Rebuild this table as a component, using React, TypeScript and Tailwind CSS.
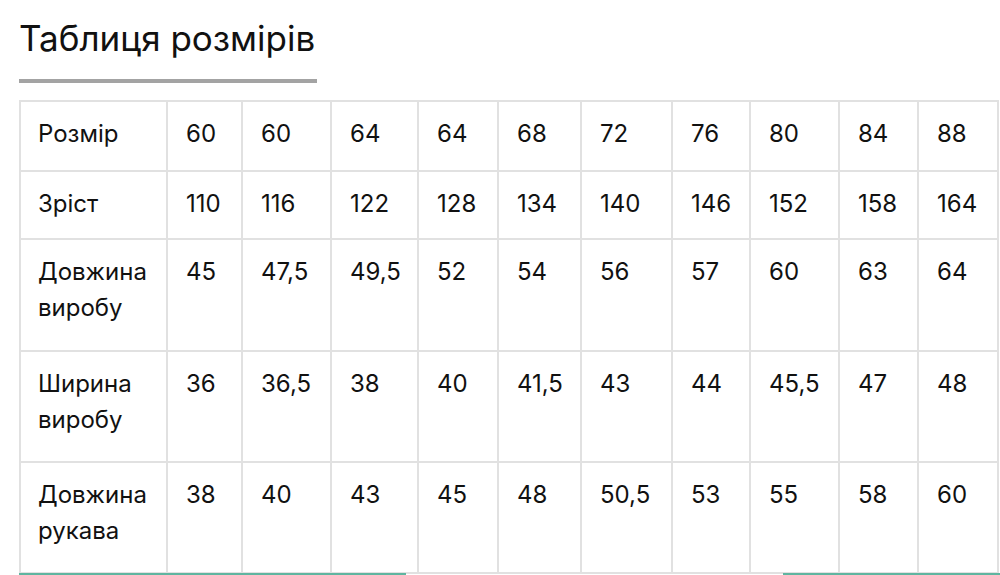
import React from "react";

const widths = [147, 75, 89, 87, 80, 83, 91, 78, 89, 79, 80];
const heights = [70, 68, 112, 111, 111];

const rows: { label: string[]; values: string[] }[] = [
  { label: ["Розмір"], values: ["60", "60", "64", "64", "68", "72", "76", "80", "84", "88"] },
  { label: ["Зріст"], values: ["110", "116", "122", "128", "134", "140", "146", "152", "158", "164"] },
  { label: ["Довжина", "виробу"], values: ["45", "47,5", "49,5", "52", "54", "56", "57", "60", "63", "64"] },
  { label: ["Ширина", "виробу"], values: ["36", "36,5", "38", "40", "41,5", "43", "44", "45,5", "47", "48"] },
  { label: ["Довжина", "рукава"], values: ["38", "40", "43", "45", "48", "50,5", "53", "55", "58", "60"] },
];

export default function App() {
  return (
    <div
      className="relative w-[1000px] h-[575px] overflow-hidden bg-white text-[#111]"
      style={{ fontFamily: "Inter, Roboto, 'Noto Sans', sans-serif" }}
    >
      <div className="pl-[19px] pt-[16px]">
        <h1 className="text-[35px] leading-[44px] font-normal">Таблиця розмірів</h1>
        <div className="mt-[19px] h-[4px] w-[298px] bg-[#a3a3a3]" />
        <table className="mt-[17px] table-fixed border-collapse text-[24px] leading-[36px]">
          <colgroup>
            {widths.map((w, i) => (
              <col key={i} style={{ width: w }} />
            ))}
          </colgroup>
          <tbody>
            {rows.map((r, ri) => (
              <tr key={ri} style={{ height: heights[ri] }}>
                <td className="border-2 border-[#e1e1e1] align-top pl-[17px] pt-[14px]">
                  {r.label.map((l, li) => (
                    <div key={li}>{l}</div>
                  ))}
                </td>
                {r.values.map((v, vi) => (
                  <td key={vi} className="border-2 border-[#e1e1e1] align-top pl-[18px] pt-[14px] whitespace-nowrap">
                    {v}
                  </td>
                ))}
              </tr>
            ))}
          </tbody>
        </table>
      </div>
      <div className="absolute left-0 right-0 bottom-0 flex h-[2px]">
        <div className="ml-[19px] w-[387px] bg-[#5fb5a0]" />
        <div className="ml-[377px] flex-1 bg-[#5fb5a0]" />
      </div>
    </div>
  );
}
